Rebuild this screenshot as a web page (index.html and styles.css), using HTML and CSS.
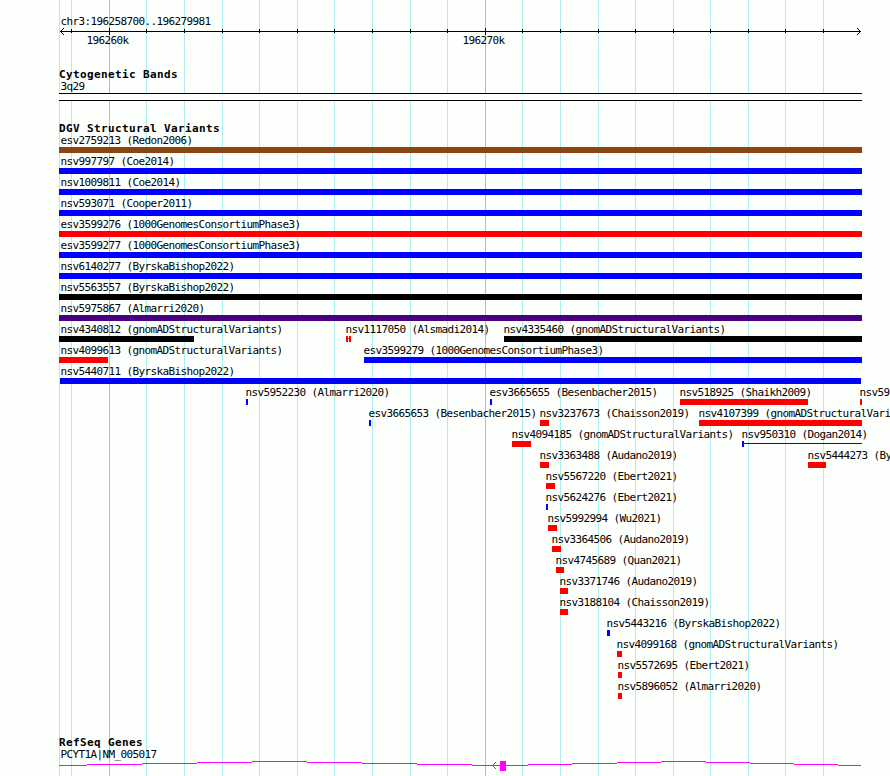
FILE: index.html
```html
<!DOCTYPE html>
<html lang="en">
<head>
<meta charset="utf-8">
<title>chr3:196258700..196279981</title>
<link rel="stylesheet" href="styles.css">
</head>
<body>
<svg class="gridlines" width="890" height="776" shape-rendering="crispEdges" aria-hidden="true">
  <path class="minor" d="M59.5 0V776M71.5 0V776M146.5 0V776M184.5 0V776M222.5 0V776M259.5 0V776M297.5 0V776M334.5 0V776M372.5 0V776M410.5 0V776M447.5 0V776M522.5 0V776M560.5 0V776M598.5 0V776M635.5 0V776M673.5 0V776M710.5 0V776M748.5 0V776M785.5 0V776M823.5 0V776"/>
  <path class="major" d="M109.5 0V776M485.5 0V776"/>
</svg>
<main class="browser">
  <section class="ruler">
    <div class="label edge">chr3:196258700..196279981</div>
    <svg class="axis" width="803" height="7" shape-rendering="crispEdges">
      <path d="M1 3.5H802M12.5 1V5M87.5 1V5M125.5 1V5M163.5 1V5M200.5 1V5M238.5 1V5M275.5 1V5M313.5 1V5M351.5 1V5M388.5 1V5M463.5 1V5M501.5 1V5M539.5 1V5M576.5 1V5M614.5 1V5M651.5 1V5M689.5 1V5M726.5 1V5M764.5 1V5M50.5 0V7M426.5 0V7"/>
      <path class="px" d="M4 0h1v1h-1zM3 1h1v1h-1zM2 2h1v1h-1zM2 4h1v1h-1zM3 5h1v1h-1zM4 6h1v1h-1zM798 0h1v1h-1zM799 1h1v1h-1zM800 2h1v1h-1zM800 4h1v1h-1zM799 5h1v1h-1zM798 6h1v1h-1z"/>
    </svg>
    <div class="lane ticks">
      <div class="feature" style="--x:28px"><span class="label">196260k</span></div>
      <div class="feature" style="--x:404px"><span class="label">196270k</span></div>
    </div>
  </section>

  <section class="cyto">
    <h2>Cytogenetic Bands</h2>
    <div class="label edge">3q29</div>
    <div class="band"></div>
  </section>

  <section class="variants">
    <h2>DGV Structural Variants</h2>
    <div class="lane"><div class="feature brown" style="--x:0px;--w:803px"><span class="label edge">esv2759213 (Redon2006)</span><i class="bar"></i></div></div>
    <div class="lane"><div class="feature blue" style="--x:0px;--w:803px"><span class="label edge">nsv997797 (Coe2014)</span><i class="bar"></i></div></div>
    <div class="lane"><div class="feature blue" style="--x:0px;--w:803px"><span class="label edge">nsv1009811 (Coe2014)</span><i class="bar"></i></div></div>
    <div class="lane"><div class="feature blue" style="--x:0px;--w:803px"><span class="label edge">nsv593071 (Cooper2011)</span><i class="bar"></i></div></div>
    <div class="lane"><div class="feature red" style="--x:0px;--w:803px"><span class="label edge">esv3599276 (1000GenomesConsortiumPhase3)</span><i class="bar"></i></div></div>
    <div class="lane"><div class="feature blue" style="--x:0px;--w:803px"><span class="label edge">esv3599277 (1000GenomesConsortiumPhase3)</span><i class="bar"></i></div></div>
    <div class="lane"><div class="feature blue" style="--x:0px;--w:803px"><span class="label edge">nsv6140277 (ByrskaBishop2022)</span><i class="bar"></i></div></div>
    <div class="lane"><div class="feature black" style="--x:0px;--w:803px"><span class="label edge">nsv5563557 (ByrskaBishop2022)</span><i class="bar"></i></div></div>
    <div class="lane"><div class="feature indigo" style="--x:0px;--w:803px"><span class="label edge">nsv5975867 (Almarri2020)</span><i class="bar"></i></div></div>
    <div class="lane">
      <div class="feature black" style="--x:0px;--w:135px"><span class="label edge">nsv4340812 (gnomADStructuralVariants)</span><i class="bar"></i></div>
      <div class="feature red" style="--x:287px;--w:5px"><span class="label">nsv1117050 (Alsmadi2014)</span><i class="bar paired"></i></div>
      <div class="feature black" style="--x:445px;--w:358px"><span class="label">nsv4335460 (gnomADStructuralVariants)</span><i class="bar"></i></div>
    </div>
    <div class="lane">
      <div class="feature red" style="--x:0px;--w:49px"><span class="label edge">nsv4099613 (gnomADStructuralVariants)</span><i class="bar"></i></div>
      <div class="feature blue" style="--x:305px;--w:498px"><span class="label">esv3599279 (1000GenomesConsortiumPhase3)</span><i class="bar"></i></div>
    </div>
    <div class="lane"><div class="feature blue" style="--x:1px;--w:801px"><span class="label inner">nsv5440711 (ByrskaBishop2022)</span><i class="bar"></i></div></div>
    <div class="lane">
      <div class="feature blue" style="--x:187px;--w:2px"><span class="label">nsv5952230 (Almarri2020)</span><i class="bar"></i></div>
      <div class="feature blue" style="--x:431px;--w:2px"><span class="label">esv3665655 (Besenbacher2015)</span><i class="bar"></i></div>
      <div class="feature red" style="--x:621px;--w:128px"><span class="label">nsv518925 (Shaikh2009)</span><i class="bar"></i></div>
      <div class="feature red" style="--x:801px;--w:2px"><span class="label">nsv59</span><i class="bar"></i></div>
    </div>
    <div class="lane">
      <div class="feature blue" style="--x:310px;--w:2px"><span class="label">esv3665653 (Besenbacher2015)</span><i class="bar"></i></div>
      <div class="feature red" style="--x:481px;--w:9px"><span class="label">nsv3237673 (Chaisson2019)</span><i class="bar"></i></div>
      <div class="feature red" style="--x:640px;--w:163px"><span class="label">nsv4107399 (gnomADStructuralVari</span><i class="bar"></i></div>
    </div>
    <div class="lane">
      <div class="feature red" style="--x:453px;--w:19px"><span class="label">nsv4094185 (gnomADStructuralVariants)</span><i class="bar"></i></div>
      <div class="feature blue" style="--x:683px;--w:120px"><span class="label">nsv950310 (Dogan2014)</span><i class="bar tail"></i></div>
    </div>
    <div class="lane">
      <div class="feature red" style="--x:481px;--w:9px"><span class="label">nsv3363488 (Audano2019)</span><i class="bar"></i></div>
      <div class="feature red" style="--x:749px;--w:18px"><span class="label">nsv5444273 (By</span><i class="bar"></i></div>
    </div>
    <div class="lane"><div class="feature red" style="--x:487px;--w:9px"><span class="label">nsv5567220 (Ebert2021)</span><i class="bar"></i></div></div>
    <div class="lane"><div class="feature blue" style="--x:487px;--w:2px"><span class="label">nsv5624276 (Ebert2021)</span><i class="bar"></i></div></div>
    <div class="lane"><div class="feature red" style="--x:489px;--w:9px"><span class="label">nsv5992994 (Wu2021)</span><i class="bar"></i></div></div>
    <div class="lane"><div class="feature red" style="--x:493px;--w:9px"><span class="label">nsv3364506 (Audano2019)</span><i class="bar"></i></div></div>
    <div class="lane"><div class="feature red" style="--x:497px;--w:8px"><span class="label">nsv4745689 (Quan2021)</span><i class="bar"></i></div></div>
    <div class="lane"><div class="feature red" style="--x:501px;--w:8px"><span class="label">nsv3371746 (Audano2019)</span><i class="bar"></i></div></div>
    <div class="lane"><div class="feature red" style="--x:501px;--w:8px"><span class="label">nsv3188104 (Chaisson2019)</span><i class="bar"></i></div></div>
    <div class="lane"><div class="feature blue" style="--x:548px;--w:3px"><span class="label">nsv5443216 (ByrskaBishop2022)</span><i class="bar"></i></div></div>
    <div class="lane"><div class="feature red" style="--x:558px;--w:5px"><span class="label">nsv4099168 (gnomADStructuralVariants)</span><i class="bar"></i></div></div>
    <div class="lane"><div class="feature red" style="--x:559px;--w:4px"><span class="label">nsv5572695 (Ebert2021)</span><i class="bar"></i></div></div>
    <div class="lane"><div class="feature red" style="--x:559px;--w:4px"><span class="label">nsv5896052 (Almarri2020)</span><i class="bar"></i></div></div>
  </section>

  <section class="genes">
    <h2>RefSeq Genes</h2>
    <div class="label edge">PCYT1A|NM_005017</div>
    <svg class="gene" width="803" height="10" shape-rendering="crispEdges">
      <path d="M0 4.5H28M28 3.5H83M83 2.5H138M138 1.5H193M193 .5H248M248 1.5H303M303 2.5H358M358 3.5H413M413 4.5H469M469 3.5H513M513 2.5H558M558 1.5H602M602 .5H647M647 1.5H691M691 2.5H735M735 3.5H779M779 4.5H802"/>
      <path class="px" d="M441 0h6v10h-6zM436 1h1v1h-1zM435 2h1v1h-1zM434 3h1v3h-1zM435 6h1v1h-1zM436 7h1v1h-1z"/>
    </svg>
  </section>
</main>
</body>
</html>
```
FILE: styles.css
```css
html {
  background: #fdfffc;
}
body {
  margin: 0;
  height: 776px;
  overflow: hidden;
}
.gridlines {
  position: absolute;
  left: 0;
  top: 0;
  z-index: -1;
}
.gridlines .minor { stroke: #afeeee; }
.gridlines .major { stroke: #87ceeb; }

.browser {
  width: 803px;
  padding: 16px 0 0 59px;
  font: 11px/12px "DejaVu Sans Mono", "Liberation Mono", monospace;
  letter-spacing: -0.622px;
  color: #000;
}
svg { display: block; }
section { display: flex; flex-direction: column; }
h2 {
  margin: 0;
  font-size: 11px;
  line-height: 16px;
  height: 14px;
  letter-spacing: 0.378px;
}
.label {
  display: block;
  height: 12px;
  margin-left: -0.5px;
  white-space: pre;
}
.label.edge { margin-left: 1.5px; }
.label.inner { margin-left: 0.5px; }

.ruler { height: 51px; }
.ruler > .label { height: 12px; }
.axis path { stroke: #000; fill: none; }
.axis .px { stroke: none; fill: #000; }

.cyto { height: 54px; }
.cyto .label { height: 12px; }
.band {
  box-sizing: border-box;
  height: 8px;
  border: solid #000;
  border-width: 1px 0;
  background: #fff;
}

.variants { height: 614px; }
.lane {
  display: grid;
  flex: none;
  height: 21px;
}
.feature {
  grid-area: 1 / 1;
  width: 0;
  margin-left: var(--x);
}
.bar {
  display: block;
  width: var(--w);
  height: 6px;
  background: var(--c);
}
.paired {
  background:
    linear-gradient(var(--c), var(--c)) 0 0 / 2px 6px no-repeat,
    linear-gradient(var(--c), var(--c)) 3px 0 / 2px 6px no-repeat,
    linear-gradient(var(--c), var(--c)) 0 2px / 5px 1px no-repeat;
}
.tail {
  background:
    linear-gradient(var(--c), var(--c)) 0 0 / 2px 6px no-repeat,
    linear-gradient(var(--c), var(--c)) 0 2px / 100% 1px no-repeat;
}
.brown { --c: #8b4513; }
.blue { --c: #00f; }
.red { --c: #f00; }
.black { --c: #000; }
.indigo { --c: #4b0082; }

.gene path { stroke: #f0f; fill: none; }
.gene .px { stroke: none; fill: #f0f; }
```
